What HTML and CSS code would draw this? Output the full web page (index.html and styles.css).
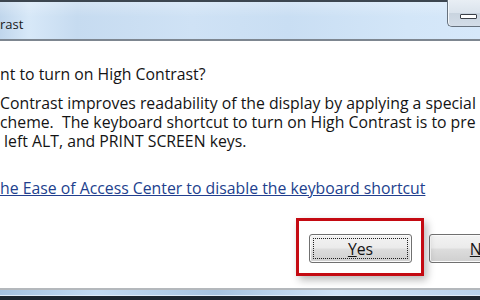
FILE: index.html
```html
<!DOCTYPE html>
<html lang="en">
<head>
    <meta charset="UTF-8">
    <title>High Contrast</title>
    <link rel="stylesheet" href="styles.css">
</head>
<body>
    <div class="window">
        <div class="titlebar">
            <span class="title">rast</span>
            <div class="min-btn"><span class="min-icon"></span></div>
        </div>
        <div class="client">
            <p class="question">nt to turn on High Contrast?</p>
            <p class="info">
                <span class="line">Contrast improves readability of the display by applying a special s</span>
                <span class="line">cheme.  The keyboard shortcut to turn on High Contrast is to pre</span>
                <span class="line"> left ALT, and PRINT SCREEN keys.</span>
            </p>
            <a class="link" href="#">he Ease of Access Center to disable the keyboard shortcut</a>
            <div class="buttons">
                <div class="focus-wrap">
                    <button class="btn btn-default"><span class="focus-ring"><u>Y</u>es</span></button>
                    <div class="callout"></div>
                </div>
                <button class="btn"><span class="focus-ring plain"><u>N</u>o</span></button>
            </div>
        </div>
        <div class="frame-bottom"></div>
    </div>
</body>
</html>
```

FILE: styles.css
```css
body, html {
    margin: 0;
    padding: 0;
    background-color: #ffffff;
    overflow: hidden;
}

.window {
    width: 480px;
    height: 300px;
    display: flex;
    flex-direction: column;
    font-family: 'Open Sans', 'Noto Sans', sans-serif;
    color: #141414;
}

.titlebar {
    height: 37px;
    flex: none;
    display: flex;
    align-items: flex-start;
    justify-content: space-between;
    border-top: 2px solid #3c4650;
    border-bottom: 2px solid #7d8690;
    background: linear-gradient(180deg, rgba(255, 255, 255, 0.25), rgba(255, 255, 255, 0) 40%),
        linear-gradient(90deg, #c0d6ec 0%, #d7e8f8 6%, #c6dbf0 16%, #cfe2f5 40%, #c9def3 60%, #d3e6f8 85%, #d6e8fa 100%);
}

.title {
    font-size: 13px;
    line-height: 18px;
    margin-top: 13px;
    color: #1a1a1a;
}

.min-btn {
    box-sizing: border-box;
    width: 33px;
    height: 27px;
    margin-top: -2px;
    padding: 14px 0 0 12px;
    border: 1px solid #66717d;
    border-top: none;
    border-right: none;
    border-bottom-left-radius: 5px;
    background: linear-gradient(180deg, #e8eef4 0%, #dae3ec 50%, #c9d4df 51%, #d3dde8 100%);
    box-shadow: inset 1px 0 0 #f4f8fb;
}

.min-icon {
    display: block;
    width: 15px;
    height: 3px;
    background: #ffffff;
    border: 1px solid #3a4048;
    border-radius: 1px;
}

.client {
    flex: 1;
    display: flex;
    flex-direction: column;
    font-size: 15.8px;
    overflow: hidden;
}

.question {
    margin: 24px 0 0 0;
    line-height: 19px;
    white-space: pre;
}

.info {
    margin: 10px 0 0 0;
    line-height: 19px;
}

.line {
    display: block;
    white-space: pre;
}

.link {
    margin-top: 28px;
    line-height: 19px;
    color: #223f8e;
    white-space: pre;
    align-self: flex-start;
}

.buttons {
    display: flex;
    gap: 17px;
    margin: 36px 0 0 309px;
}

.focus-wrap {
    position: relative;
}

.btn {
    width: 103px;
    height: 29px;
    padding: 3px;
    border: 1px solid #707070;
    border-radius: 3px;
    background: linear-gradient(180deg, #f3f3f3 0%, #ebebeb 48%, #dddddd 52%, #cfcfcf 100%);
    box-shadow: inset 0 0 0 1px #fbfbfb;
    font-family: 'Open Sans', 'Noto Sans', sans-serif;
    font-size: 15.8px;
    color: #141414;
    display: flex;
    flex: none;
}

.focus-ring {
    flex: 1;
    display: flex;
    align-items: center;
    justify-content: center;
    border: 1px dotted #202020;
    line-height: 18px;
}

.focus-ring.plain {
    border-color: transparent;
}

.callout {
    position: absolute;
    left: -13px;
    top: -16px;
    width: 128px;
    height: 58px;
    box-sizing: border-box;
    border: 3px solid #c40a12;
    box-shadow: 3px 4px 8px rgba(0, 0, 0, 0.28);
}

.frame-bottom {
    height: 6px;
    flex: none;
    border-top: 2px solid #b4b8bc;
    border-bottom: 4px solid #1c2630;
    background: linear-gradient(90deg, #a4c2e0 0%, #c2dbf3 20%, #a6c3e0 45%, #cfe3f8 70%, #b8d2ec 100%);
    box-shadow: inset 0 -1px 0 #e0ecf8;
}
```
